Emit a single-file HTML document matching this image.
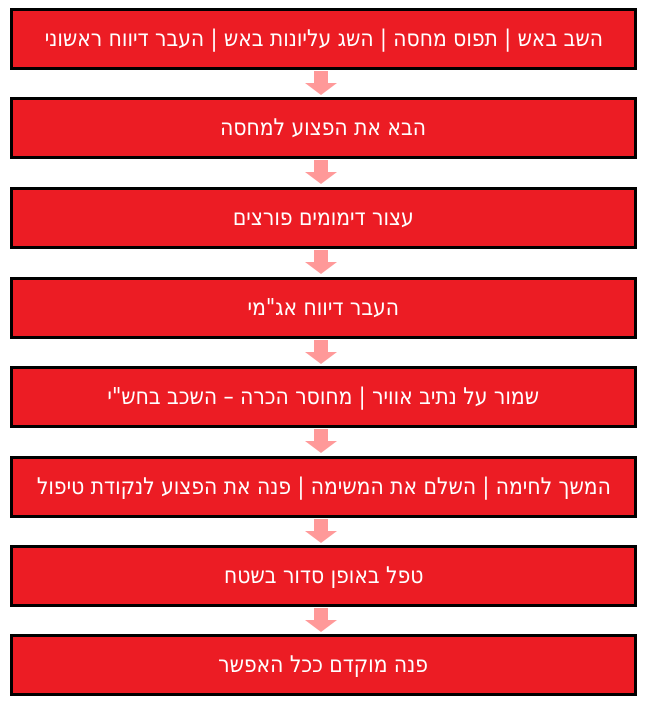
<!DOCTYPE html>
<html><head><meta charset="utf-8"><style>
body{margin:0;width:645px;height:702px;background:#fff;position:relative;overflow:hidden;font-family:"DejaVu Sans Condensed","DejaVu Sans","Liberation Sans",sans-serif;}
.b{position:absolute;left:10px;width:621px;height:56px;border:3px solid #000;background:#ec1c24;color:#fff;font-size:23px;display:flex;align-items:center;justify-content:center;direction:rtl;}
.b span{display:inline-block;transform:scaleX(0.98);}
.a{position:absolute;left:305px;width:32px;height:26px;}
</style></head><body>
<div class="b" style="top:8px"><span>השב באש | תפוס מחסה | השג עליונות באש | העבר דיווח ראשוני</span></div>
<div class="b" style="top:97px"><span>הבא את הפצוע למחסה</span></div>
<div class="b" style="top:187px"><span>עצור דימומים פורצים</span></div>
<div class="b" style="top:277px"><span>העבר דיווח אג"מי</span></div>
<div class="b" style="top:366px"><span>שמור על נתיב אוויר | מחוסר הכרה – השכב בחש"י</span></div>
<div class="b" style="top:456px"><span>המשך לחימה | השלם את המשימה | פנה את הפצוע לנקודת טיפול</span></div>
<div class="b" style="top:545px"><span>טפל באופן סדור בשטח</span></div>
<div class="b" style="top:634px"><span>פנה מוקדם ככל האפשר</span></div>
<svg class="a" style="top:71px" viewBox="0 0 32 26"><path d="M9 0H23V12H32L16 24L0 12H9Z" fill="#ff9999"/></svg>
<svg class="a" style="top:160px" viewBox="0 0 32 26"><path d="M9 0H23V12H32L16 24L0 12H9Z" fill="#ff9999"/></svg>
<svg class="a" style="top:250px" viewBox="0 0 32 26"><path d="M9 0H23V12H32L16 24L0 12H9Z" fill="#ff9999"/></svg>
<svg class="a" style="top:340px" viewBox="0 0 32 26"><path d="M9 0H23V12H32L16 24L0 12H9Z" fill="#ff9999"/></svg>
<svg class="a" style="top:429px" viewBox="0 0 32 26"><path d="M9 0H23V12H32L16 24L0 12H9Z" fill="#ff9999"/></svg>
<svg class="a" style="top:519px" viewBox="0 0 32 26"><path d="M9 0H23V12H32L16 24L0 12H9Z" fill="#ff9999"/></svg>
<svg class="a" style="top:608px" viewBox="0 0 32 26"><path d="M9 0H23V12H32L16 24L0 12H9Z" fill="#ff9999"/></svg>
</body></html>
